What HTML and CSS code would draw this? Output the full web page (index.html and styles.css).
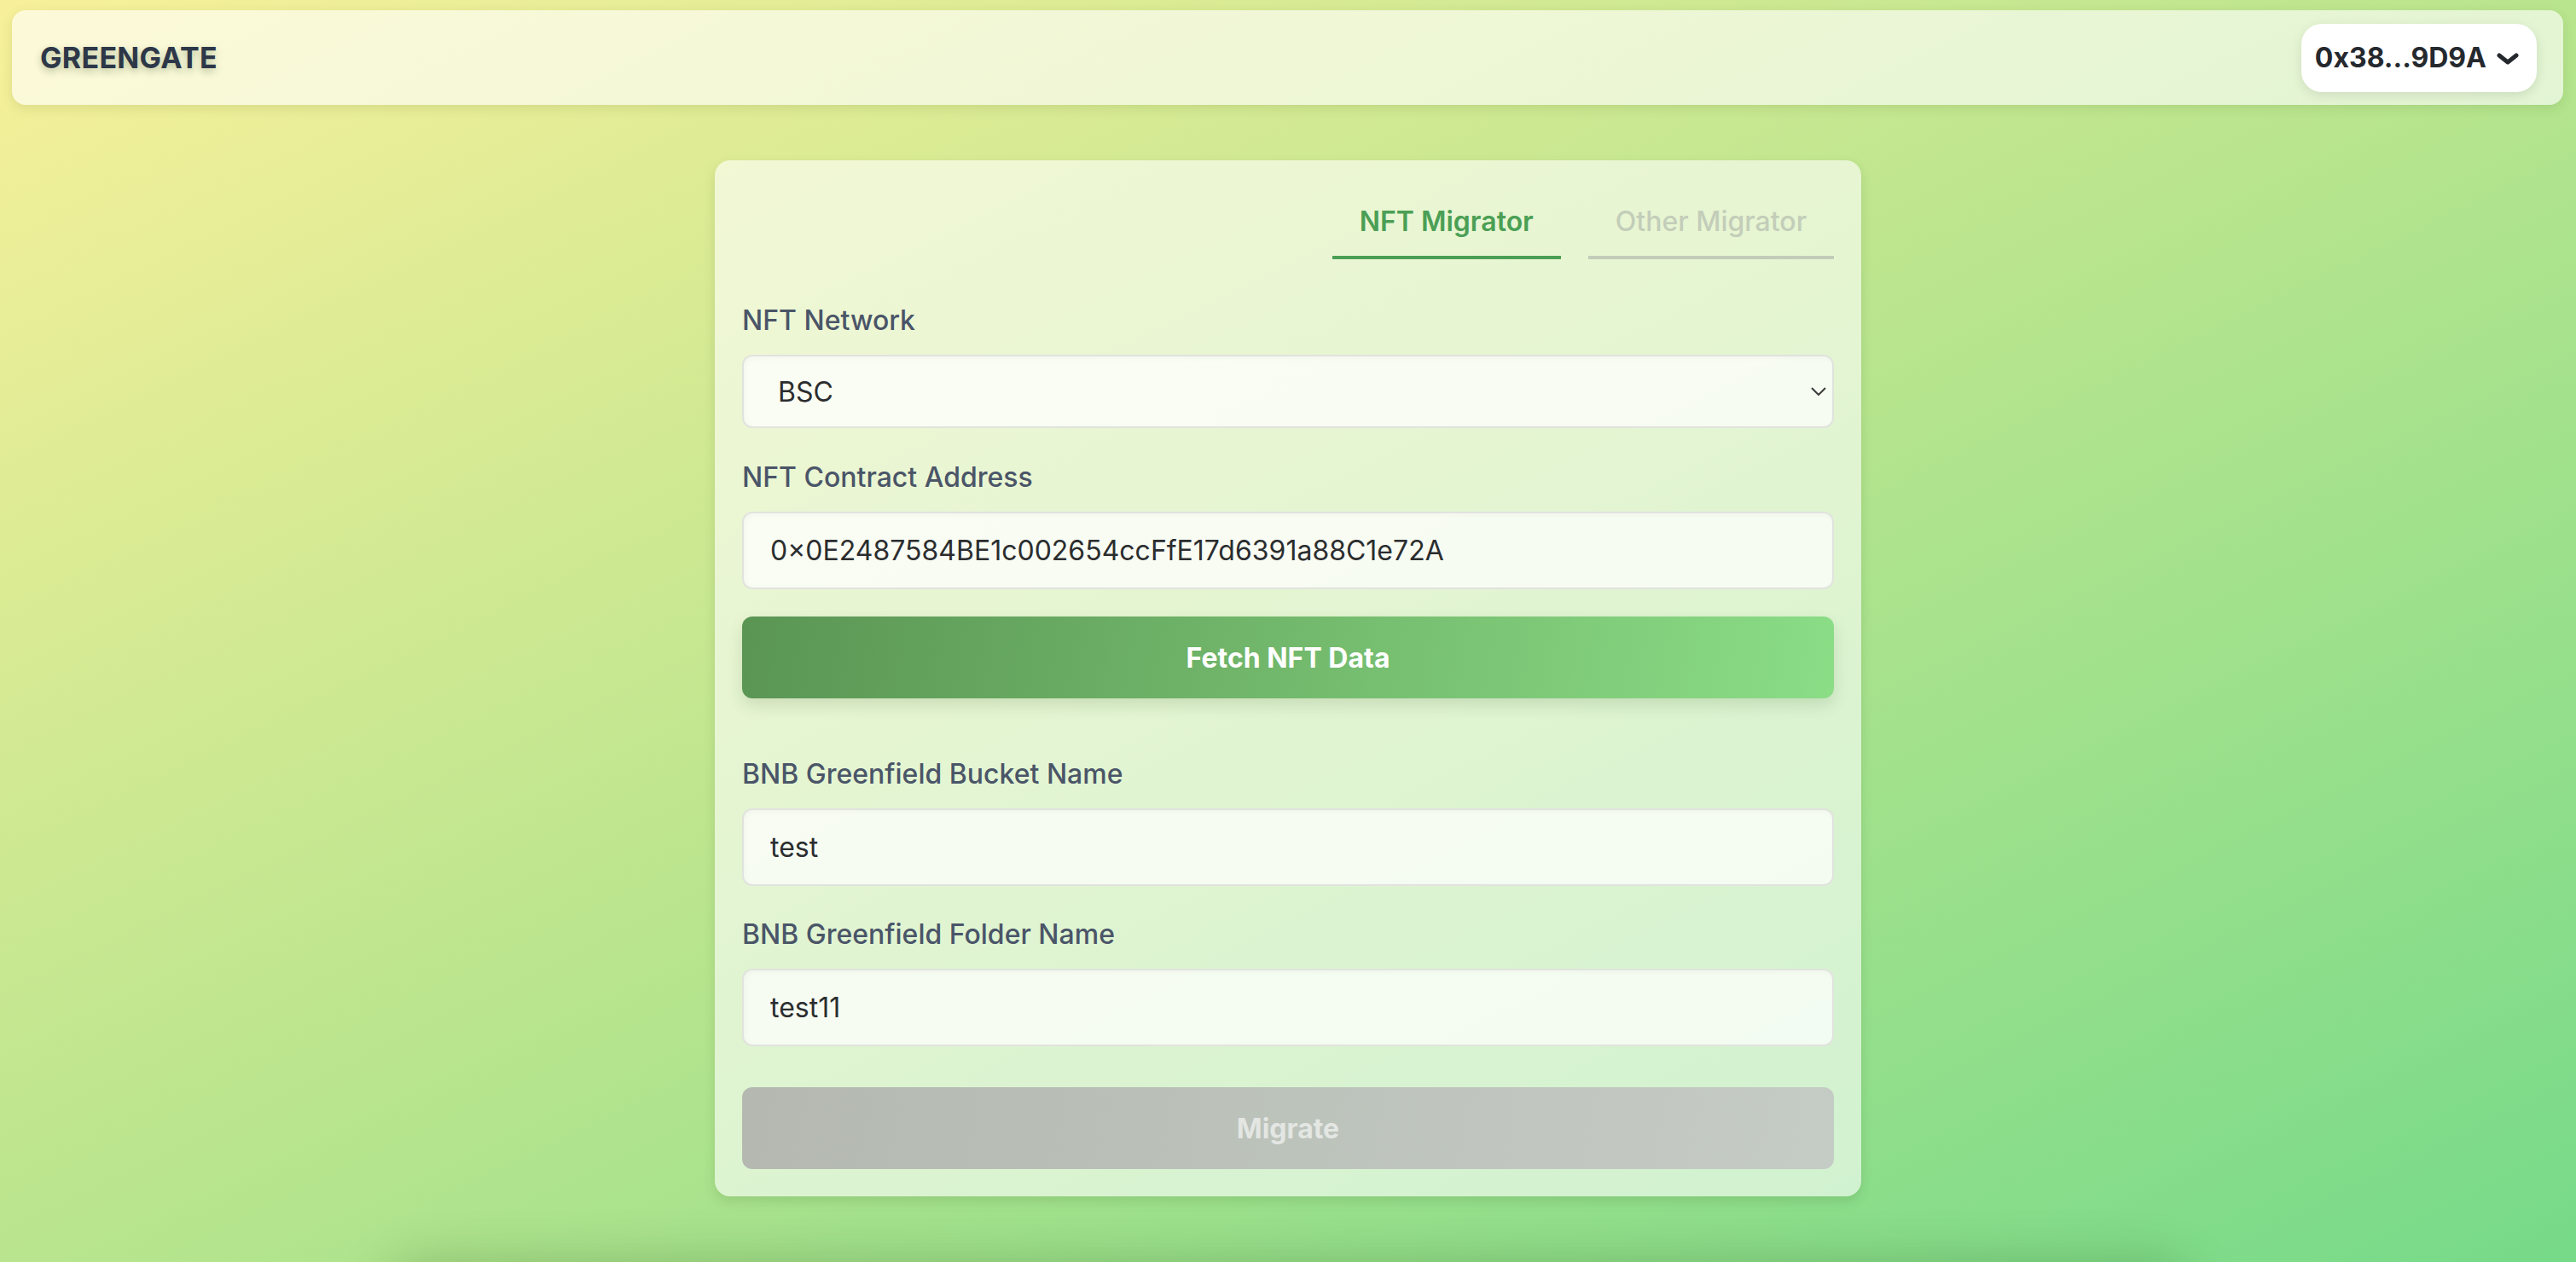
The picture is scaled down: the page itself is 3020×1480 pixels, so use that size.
FILE: index.html
```html
<!DOCTYPE html>
<html lang="en">
<head>
<meta charset="utf-8">
<title>Greengate</title>
<link rel="stylesheet" href="styles.css">
</head>
<body>
<header class="topbar">
  <div class="brand">GREENGATE</div>
  <button class="wallet" type="button">
    <span>0x38...9D9A</span>
    <svg class="wallet-chev" width="26" height="14" viewBox="0 0 26 14"><polyline points="3,3 13,11 23,3" fill="none" stroke="#25292e" stroke-width="5" stroke-linecap="round" stroke-linejoin="round"/></svg>
  </button>
</header>

<main class="main">
  <section class="card">
    <nav class="tabs">
      <div class="tab tab-active">NFT Migrator</div>
      <div class="tab tab-idle">Other Migrator</div>
    </nav>

    <div class="panel">
      <div class="field">
        <label class="label">NFT Network</label>
        <div class="select-wrap">
          <select class="control select">
            <option>BSC</option>
          </select>
          <svg class="select-chev" width="18" height="10" viewBox="0 0 18 10"><polyline points="1,1 9,9 17,1" fill="none" stroke="#3a3a3a" stroke-width="2"/></svg>
        </div>
      </div>

      <div class="field gap-sm">
        <label class="label">NFT Contract Address</label>
        <input class="control input" type="text" value="0×0E2487584BE1c002654ccFfE17d6391a88C1e72A">
      </div>

      <button class="btn btn-fetch" type="button">Fetch NFT Data</button>

      <div class="field gap-lg">
        <label class="label">BNB Greenfield Bucket Name</label>
        <input class="control input" type="text" value="test">
      </div>

      <div class="field gap-sm2">
        <label class="label">BNB Greenfield Folder Name</label>
        <input class="control input" type="text" value="test11">
      </div>

      <button class="btn btn-migrate" type="button" disabled>Migrate</button>
    </div>
  </section>

  <section class="below"></section>
</main>
</body>
</html>
```

FILE: styles.css
```css
html, body {
  margin: 0;
  padding: 0;
}

body {
  width: 3020px;
  height: 1480px;
  overflow: hidden;
  background: linear-gradient(to bottom right, #f8f09a 0%, #b9e58e 50%, #76da89 100%);
  font-family: Inter, "Noto Sans", sans-serif;
  color: #2d3748;
}

.topbar {
  margin: 12px 15px 0 14px;
  height: 111px;
  box-sizing: border-box;
  padding: 0 31px 0 33px;
  display: flex;
  align-items: center;
  justify-content: space-between;
  background: rgba(255, 255, 255, 0.62);
  border-radius: 16px;
  box-shadow: 0 4px 14px rgba(60, 80, 20, 0.12);
}

.brand {
  font-size: 34px;
  font-weight: 700;
  letter-spacing: 0.3px;
  color: #2d3748;
  text-shadow: 0 4px 8px rgba(40, 70, 20, 0.3);
}

.wallet {
  height: 80px;
  box-sizing: border-box;
  padding: 0 21px 0 16px;
  display: flex;
  align-items: center;
  gap: 12px;
  border: none;
  border-radius: 24px;
  background: #ffffff;
  box-shadow: 0 4px 14px rgba(0, 0, 0, 0.1);
  font-family: Inter, "Liberation Sans", sans-serif;
  font-feature-settings: "calt" 0;
  font-size: 32px;
  font-weight: 700;
  color: #25292e;
}

.wallet-chev {
  margin-top: 2px;
}

.main {
  display: flex;
  flex-direction: column;
  align-items: center;
  padding-top: 65px;
}

.card {
  width: 1344px;
  box-sizing: border-box;
  padding: 32px;
  background: rgba(255, 255, 255, 0.6);
  border-radius: 18px;
  box-shadow: 0 6px 14px rgba(40, 80, 20, 0.14);
}

.tabs {
  display: flex;
  justify-content: flex-end;
  gap: 32px;
}

.tab {
  padding: 16px 32px;
  font-size: 32px;
  line-height: 48px;
  font-weight: 600;
  border-bottom: 4px solid;
}

.tab-active {
  color: #4b9f55;
  border-bottom-color: #4b9f55;
}

.tab-idle {
  font-weight: 500;
  color: #c3cdb9;
  border-bottom-color: #c3cbb9;
}

.panel {
  padding-top: 48px;
}

.field {
  display: flex;
  flex-direction: column;
}

.gap-sm {
  margin-top: 34px;
}

.gap-lg {
  margin-top: 65px;
}

.gap-sm2 {
  margin-top: 33px;
}

.label {
  font-size: 32px;
  line-height: 48px;
  font-weight: 500;
  color: #4a5568;
  margin-bottom: 16px;
}

.control {
  box-sizing: border-box;
  width: 100%;
  border: 2px solid #e1e3de;
  border-radius: 12px;
  background: rgba(255, 255, 255, 0.72);
  box-shadow: inset 2px 2px 6px rgba(0, 0, 0, 0.03);
  font-family: Inter, "Noto Sans", sans-serif;
  font-size: 32px;
  color: #2b2d2f;
  outline: none;
}

.select-wrap {
  position: relative;
}

.select {
  height: 86px;
  padding: 0 40px;
  appearance: none;
  -webkit-appearance: none;
}

.select-chev {
  position: absolute;
  right: 9px;
  top: 38px;
}

.input {
  height: 91px;
  padding: 0 31px;
}

.btn {
  display: block;
  width: 100%;
  height: 96px;
  border: none;
  border-radius: 12px;
  font-family: Inter, "Noto Sans", sans-serif;
  font-size: 32px;
  font-weight: 700;
}

.btn-fetch {
  margin-top: 32px;
  color: #ffffff;
  background: linear-gradient(100deg, #5a9554 0%, #70b56a 45%, #8bdd86 100%);
  box-shadow: 0 8px 18px rgba(40, 80, 30, 0.14);
}

.btn-migrate {
  margin-top: 48px;
  color: rgba(255, 255, 255, 0.6);
  background: linear-gradient(100deg, #b4b8b0 0%, #bcc3bb 50%, #c5cbc5 100%);
}

.below {
  margin-top: 95px;
  width: 2100px;
  height: 300px;
  border-radius: 40px;
  background: rgba(255, 255, 255, 0.1);
  box-shadow: 0 -6px 60px 10px rgba(40, 80, 20, 0.28);
}
```
